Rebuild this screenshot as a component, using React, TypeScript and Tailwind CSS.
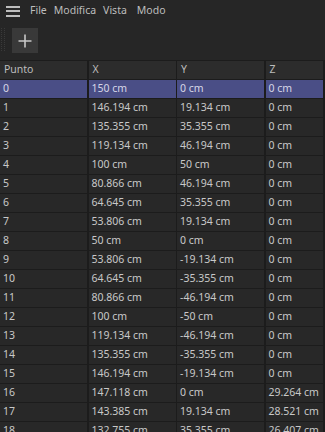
import React from "react";

const rows: [string, string, string, string][] = [
  ["0", "150 cm", "0 cm", "0 cm"],
  ["1", "146.194 cm", "19.134 cm", "0 cm"],
  ["2", "135.355 cm", "35.355 cm", "0 cm"],
  ["3", "119.134 cm", "46.194 cm", "0 cm"],
  ["4", "100 cm", "50 cm", "0 cm"],
  ["5", "80.866 cm", "46.194 cm", "0 cm"],
  ["6", "64.645 cm", "35.355 cm", "0 cm"],
  ["7", "53.806 cm", "19.134 cm", "0 cm"],
  ["8", "50 cm", "0 cm", "0 cm"],
  ["9", "53.806 cm", "-19.134 cm", "0 cm"],
  ["10", "64.645 cm", "-35.355 cm", "0 cm"],
  ["11", "80.866 cm", "-46.194 cm", "0 cm"],
  ["12", "100 cm", "-50 cm", "0 cm"],
  ["13", "119.134 cm", "-46.194 cm", "0 cm"],
  ["14", "135.355 cm", "-35.355 cm", "0 cm"],
  ["15", "146.194 cm", "-19.134 cm", "0 cm"],
  ["16", "147.118 cm", "0 cm", "29.264 cm"],
  ["17", "143.385 cm", "19.134 cm", "28.521 cm"],
  ["18", "132.755 cm", "35.355 cm", "26.407 cm"],
];

export default function App() {
  return (
    <div
      className="w-[325px] h-[432px] overflow-hidden bg-[#262626] text-[#c4c4c4]"
      style={{ fontFamily: '"Noto Sans", "Open Sans", sans-serif' }}
    >
      {/* menu bar */}
      <div className="h-[22px] flex items-center text-[10.5px] text-[#bdbdbd]">
        <div className="w-[14px] ml-[6px] mr-[10px] flex flex-col gap-[2.5px]">
          <div className="h-[2px] bg-[#bdbdbd]" />
          <div className="h-[2px] bg-[#bdbdbd]" />
          <div className="h-[2px] bg-[#bdbdbd]" />
        </div>
        <span className="mr-[7px]">File</span>
        <span className="mr-[7px]">Modifica</span>
        <span className="mr-[10px]">Vista</span>
        <span>Modo</span>
      </div>
      {/* toolbar */}
      <div className="h-[38px] flex items-start pt-[6px]">
        <div className="w-[4px] h-[25px] ml-[1px] grid grid-cols-2 gap-[1px] content-start">
          {Array.from({ length: 24 }).map((_, i) => (
            <div key={i} className="w-[1px] h-[1px] bg-[#3a3a3a]" />
          ))}
        </div>
        <div className="ml-[7px] w-[26px] h-[25px] bg-[#393939] flex items-center justify-center">
          <svg width="14" height="14" viewBox="0 0 14 14">
            <path d="M7 0.5V13.5M0.5 7H13.5" stroke="#c8c8c8" strokeWidth="1.6" />
          </svg>
        </div>
      </div>
      {/* table */}
      <div className="bg-[#1c1c1c] pt-[1px] text-[10.5px]">
        <div className="grid grid-cols-[87px_87px_87px_57px] gap-x-[1.5px] gap-y-[1px] pr-[4px]">
          {["Punto", "X", "Y", "Z"].map((h) => (
            <div key={h} className="h-[18px] bg-[#2c2c2c] pl-[4px] flex items-center text-[#bcbcbc]">
              {h}
            </div>
          ))}
          {rows.map((r, ri) =>
            r.map((c, ci) => (
              <div
                key={ri + "-" + ci}
                className={
                  "h-[18px] pl-[3px] flex items-center whitespace-nowrap overflow-hidden " +
                  (ri === 0 ? "bg-[#4a4e86] text-[#d6d6e6]" : "bg-[#282828] text-[#c8c8c8]")
                }
              >
                {c}
              </div>
            ))
          )}
        </div>
      </div>
    </div>
  );
}
